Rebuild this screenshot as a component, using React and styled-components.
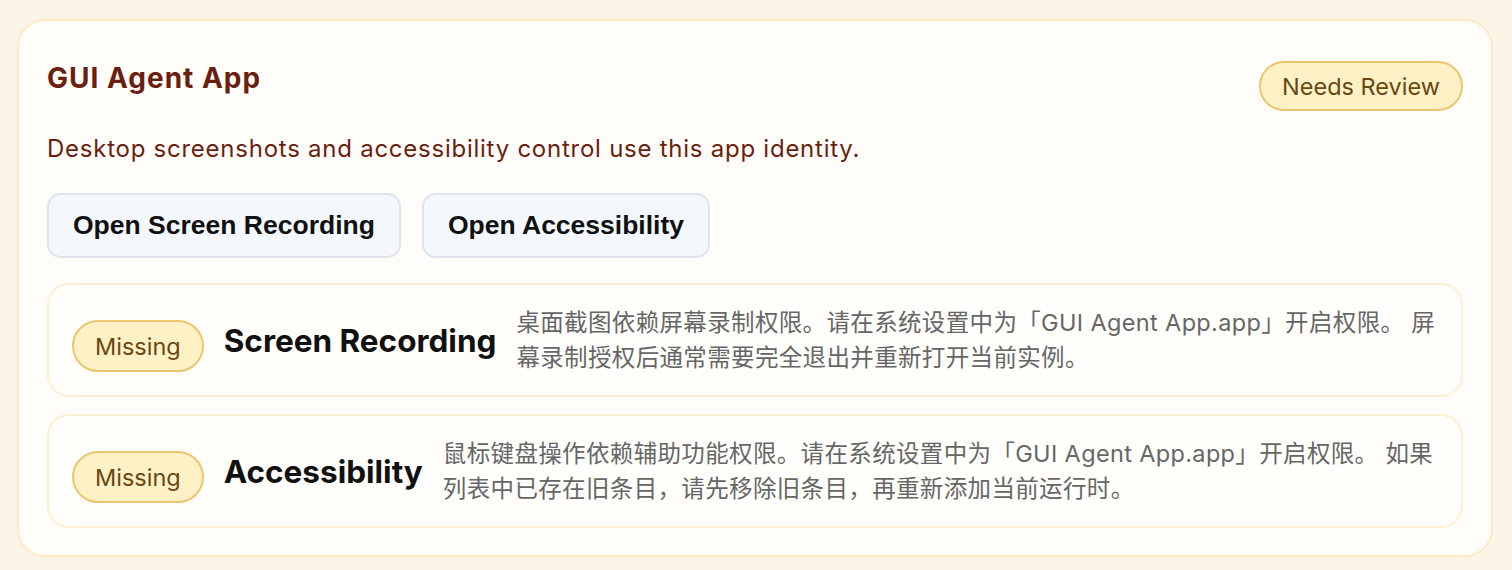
import styled, {createGlobalStyle} from 'styled-components'

const GlobalStyle = createGlobalStyle`
  body {
    margin: 0;
    background: #fcf5e7;
    font-family: Inter, "Noto Sans CJK SC", sans-serif;
  }
`

const Page = styled.div`
  padding: 19px 19px 16px 17px;
`

const Card = styled.section`
  background: #fffdf9;
  border: 2px solid #fde9c3;
  border-radius: 28px;
  padding: 40px 28px 27px 28px;
`

const Header = styled.div`
  display: flex;
  justify-content: space-between;
  align-items: flex-start;
`

const Title = styled.h2`
  margin: 0;
  font-size: 28px;
  line-height: 34px;
  letter-spacing: 1px;
  font-weight: 700;
  color: #6b1f0f;
`

const Pill = styled.span`
  display: inline-flex;
  align-items: center;
  height: ${({$h}) => $h || 50}px;
  padding: 0 21px;
  border-radius: 999px;
  background: #fef1c5;
  border: 2px solid #ebc66c;
  color: #6a4610;
  font-size: 23.5px;
  box-sizing: border-box;
  white-space: nowrap;
  flex: none;
`

const Lead = styled.p`
  margin: 22px 0 0;
  font-size: 24px;
  line-height: 31px;
  letter-spacing: 0.75px;
  color: #6b1f0f;
`

const Actions = styled.div`
  display: flex;
  gap: 21px;
  margin-top: 29px;
`

const ActionButton = styled.button`
  height: 65px;
  padding: 0 24px;
  background: #f4f8fc;
  border: 2px solid #dfe4ec;
  border-radius: 14px;
  font-family: "Liberation Sans", Arial, sans-serif;
  font-weight: 700;
  font-size: 26.5px;
  color: #111;
`

const List = styled.div`
  display: flex;
  flex-direction: column;
  gap: 17px;
  margin-top: 25px;
`

const Row = styled.div`
  display: flex;
  align-items: center;
  gap: 20px;
  padding: 20px 16px 20px 23px;
  background: #fffefb;
  border: 2px solid #feefd2;
  border-radius: 22px;
`

const RowBadge = styled(Pill)`
  margin-top: 12px;
`

const RowTitle = styled.div`
  font-size: 31.5px;
  font-weight: 700;
  color: #111;
  white-space: nowrap;
  flex: none;
`

const RowText = styled.div`
  flex: 1;
  font-size: 23.5px;
  line-height: 35px;
  letter-spacing: 0.35px;
  color: #666;
`

const permissions = [
  {
    name: 'Screen Recording',
    text: '桌面截图依赖屏幕录制权限。请在系统设置中为「GUI Agent App.app」开启权限。 屏幕录制授权后通常需要完全退出并重新打开当前实例。',
  },
  {
    name: 'Accessibility',
    text: '鼠标键盘操作依赖辅助功能权限。请在系统设置中为「GUI Agent App.app」开启权限。 如果列表中已存在旧条目，请先移除旧条目，再重新添加当前运行时。',
  },
]

const App = () => (
  <Page>
    <GlobalStyle/>
    <Card>
      <Header>
        <Title>GUI Agent App</Title>
        <Pill>Needs Review</Pill>
      </Header>
      <Lead>Desktop screenshots and accessibility control use this app identity.</Lead>
      <Actions>
        <ActionButton>Open Screen Recording</ActionButton>
        <ActionButton>Open Accessibility</ActionButton>
      </Actions>
      <List>
        {permissions.map(item => (
          <Row key={item.name}>
            <RowBadge $h={52}>Missing</RowBadge>
            <RowTitle>{item.name}</RowTitle>
            <RowText>{item.text}</RowText>
          </Row>
        ))}
      </List>
    </Card>
  </Page>
)

export default App
